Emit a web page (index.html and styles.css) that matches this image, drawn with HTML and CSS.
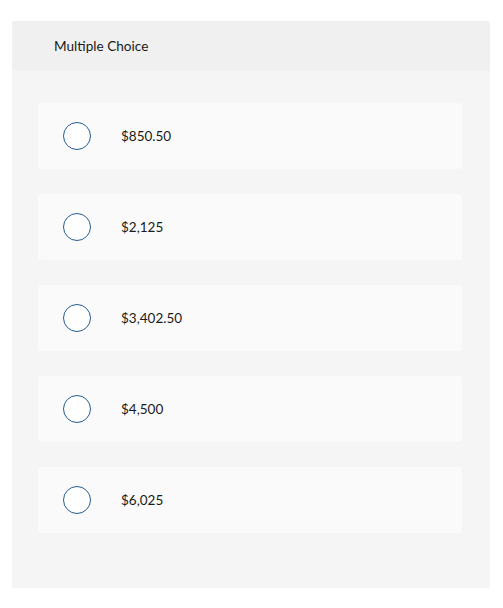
FILE: index.html
```html
<!DOCTYPE html>
<html>
<head>
<meta charset="utf-8">
<link rel="stylesheet" href="styles.css">
</head>
<body>
<div class="card">
  <div class="header">Multiple Choice</div>
  <div class="body">
    <div class="option"><span class="radio"></span><span class="label">$850.50</span></div>
    <div class="option"><span class="radio"></span><span class="label">$2,125</span></div>
    <div class="option"><span class="radio"></span><span class="label">$3,402.50</span></div>
    <div class="option"><span class="radio"></span><span class="label">$4,500</span></div>
    <div class="option"><span class="radio"></span><span class="label">$6,025</span></div>
  </div>
</div>
</body>
</html>
```
FILE: styles.css
```css
html, body { margin: 0; padding: 0; background: #ffffff; }
body { font-family: Lato, "Open Sans", sans-serif; color: #1a1a1a; }
.card {
  margin: 21px 13px 0 12px;
  width: 478px;
  border-radius: 3px;
  overflow: hidden;
  background: #f5f5f5;
}
.header {
  height: 50px;
  background: #f0f0f0;
  display: flex;
  align-items: center;
  padding-left: 42px;
  font-size: 13.6px;
}
.body {
  padding: 32px 28px 55px 26px;
  display: flex;
  flex-direction: column;
  gap: 25.5px;
}
.option {
  height: 65.5px;
  background: #fafafa;
  border-radius: 3px;
  display: flex;
  align-items: center;
  padding-left: 25px;
}
.radio {
  width: 26px;
  height: 26px;
  border: 1.6px solid #245c93;
  border-radius: 50%;
  background: #fff;
  flex: none;
}
.label {
  margin-left: 30px;
  font-size: 13.5px;
}
```
